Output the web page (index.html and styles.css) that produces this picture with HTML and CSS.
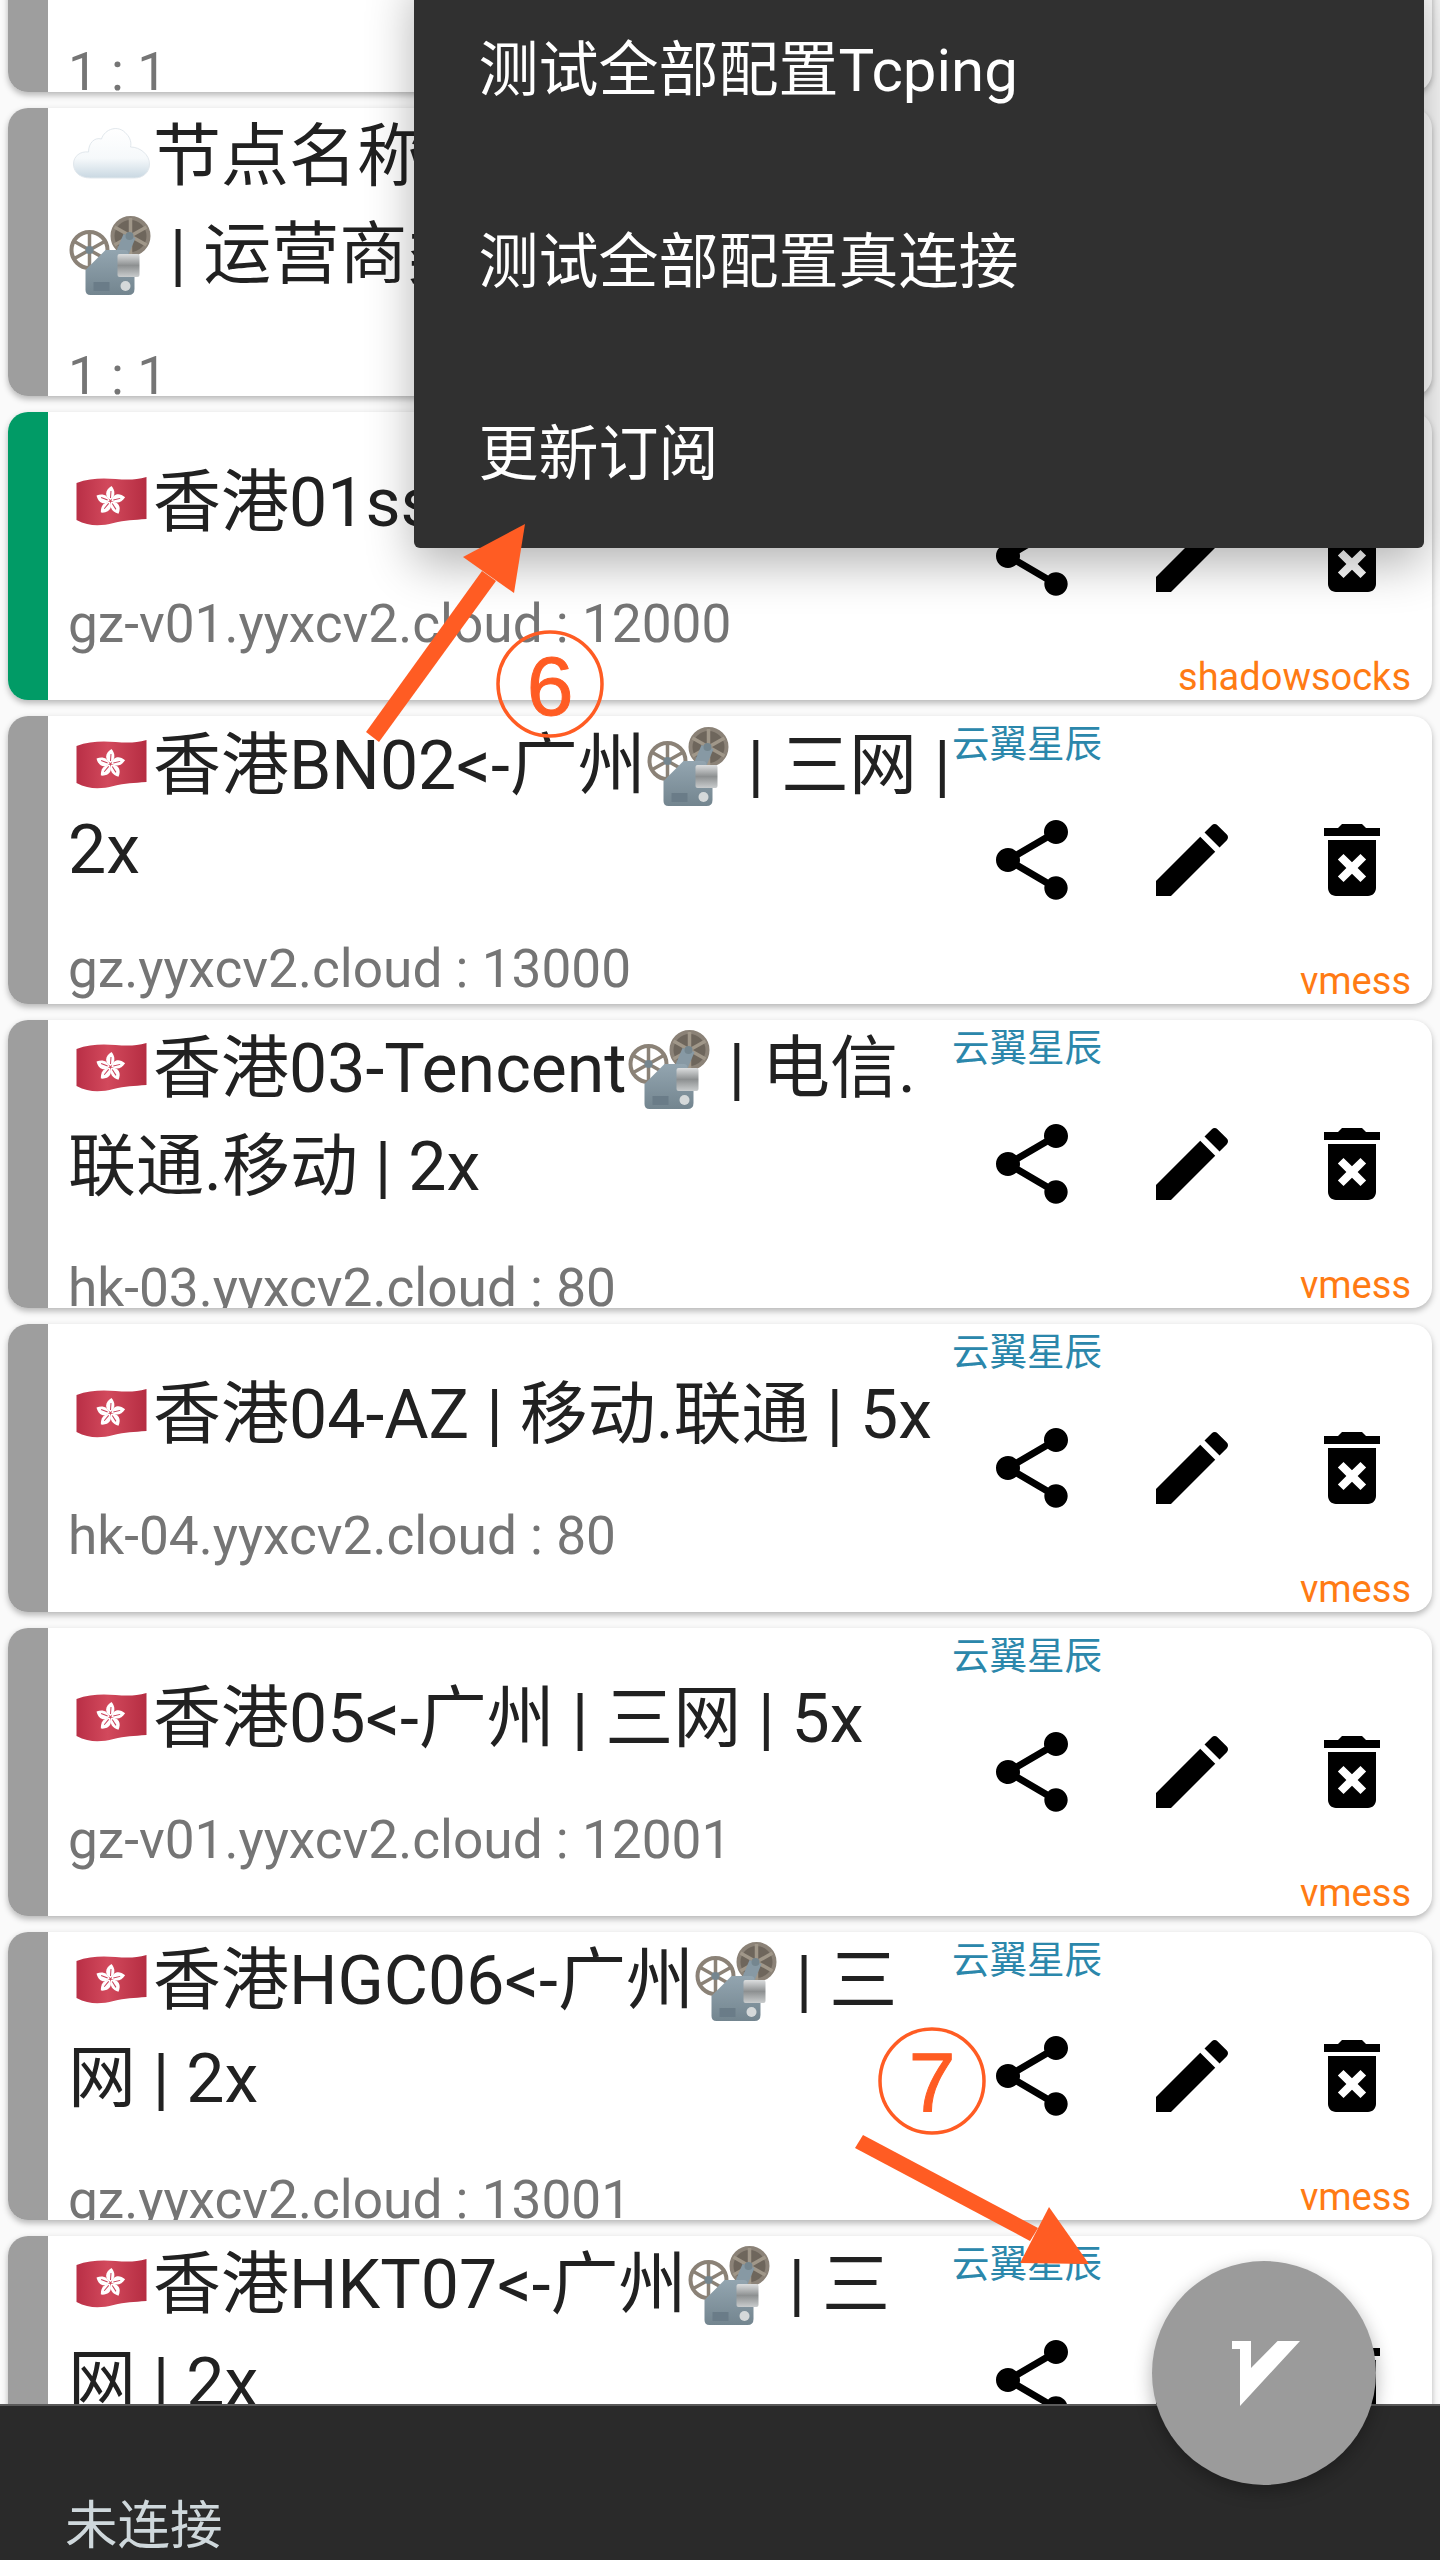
FILE: index.html
```html
<!DOCTYPE html>
<html lang="zh-CN">
<head>
    <meta charset="UTF-8">
    <meta name="viewport" content="width=device-width, initial-scale=1.0">
    <title>v2rayNG</title>
    <link rel="stylesheet" href="styles.css">
</head>
<body>

<svg class="sprite" aria-hidden="true">
    <defs>
        <linearGradient id="flag-red" x1="0" y1="0" x2="1" y2="0">
            <stop offset="0" stop-color="#b92f46"/>
            <stop offset="0.45" stop-color="#d2495c"/>
            <stop offset="1" stop-color="#b52d42"/>
        </linearGradient>
        <linearGradient id="cloud-fill" x1="0" y1="0" x2="0" y2="1">
            <stop offset="0" stop-color="#ffffff"/>
            <stop offset="0.6" stop-color="#f6f9fb"/>
            <stop offset="1" stop-color="#c9d8e2"/>
        </linearGradient>
        <linearGradient id="body-fill" x1="0" y1="0" x2="0" y2="1">
            <stop offset="0" stop-color="#93a5b0"/>
            <stop offset="1" stop-color="#73858f"/>
        </linearGradient>
        <linearGradient id="lens-fill" x1="0" y1="0" x2="0" y2="1">
            <stop offset="0" stop-color="#dcdedf"/>
            <stop offset="0.5" stop-color="#8d9091"/>
            <stop offset="1" stop-color="#c9cccd"/>
        </linearGradient>
        <symbol id="petal" viewBox="-16 -16 32 32" overflow="visible">
            <path fill="#fff" d="M0 -1C-6 -4 -6 -11 1 -15C5 -10 5 -5 0 -1Z"/>
            <path fill="none" stroke="#c9405a" stroke-width="1" d="M0 -3L0.500 -10"/>
        </symbol>
        <symbol id="flag-hk" viewBox="0 0 84 84">
            <path fill="url(#flag-red)" d="M8 27C21 22 35 22 47 23S67 24 78 21V63C65 64 57 64 45 67S21 71 8 64Z"/>
            <g transform="translate(42 45)">
                <use href="#petal" x="-16" y="-16" width="32" height="32"/>
                <use href="#petal" x="-16" y="-16" width="32" height="32" transform="rotate(72)"/>
                <use href="#petal" x="-16" y="-16" width="32" height="32" transform="rotate(144)"/>
                <use href="#petal" x="-16" y="-16" width="32" height="32" transform="rotate(216)"/>
                <use href="#petal" x="-16" y="-16" width="32" height="32" transform="rotate(288)"/>
            </g>
        </symbol>
        <symbol id="cloud" viewBox="0 0 84 84">
            <path fill="url(#cloud-fill)" stroke="#e2e8ed" stroke-width="1" d="M22 68C10 68 5 61 5 54C5 46 12 41 20 42C20 33 26 27 33 29C36 19 50 14 58 24C62 28 63 33 62 37C72 37 81 45 81 54C81 62 75 68 66 68Z"/>
        </symbol>
        <symbol id="projector" viewBox="0 -3 84 84" overflow="visible">
            <g fill="none" stroke="#8b8277">
                <circle cx="21" cy="39" r="18" stroke-width="4"/>
                <path stroke-width="3.500" d="M21 21V57M5 30L37 48M5 48L37 30"/>
            </g>
            <circle cx="62" cy="25" r="18" fill="#6e665c" stroke="#8b8277" stroke-width="4"/>
            <path fill="none" stroke="#a09789" stroke-width="3.500" d="M62 7V43M46 16L78 34M46 34L78 16"/>
            <path fill="#8799a4" d="M55 23L67 27L59 46L47 42Z"/>
            <circle cx="21" cy="39" r="4" fill="#75868f"/>
            <circle cx="61" cy="25" r="4" fill="#75868f"/>
            <path fill="url(#body-fill)" d="M17 59L37 39H56Q60 39 60 43V46H68V64H66V78Q66 84 60 84H22Q17 84 17 79Z"/>
            <rect x="49" y="43" width="22" height="23" rx="2" fill="url(#lens-fill)"/>
            <rect x="25" y="71" width="16" height="9" fill="#6a7c88"/>
            <circle cx="57" cy="75" r="5" fill="#d5d9da"/>
        </symbol>
        <symbol id="icon-share" viewBox="0 0 24 24">
            <path d="M18 16.08c-.76 0-1.44.3-1.96.77L8.91 12.7c.05-.23.09-.46.09-.7s-.04-.47-.09-.7l7.05-4.11c.54.5 1.25.81 2.04.81 1.66 0 3-1.34 3-3s-1.34-3-3-3-3 1.34-3 3c0 .24.04.47.09.7L8.04 9.81C7.5 9.31 6.79 9 6 9c-1.66 0-3 1.34-3 3s1.34 3 3 3c.79 0 1.5-.31 2.04-.81l7.12 4.16c-.05.21-.08.43-.08.65 0 1.61 1.31 2.92 2.92 2.92 1.61 0 2.92-1.31 2.92-2.92s-1.31-2.92-2.92-2.92z"/>
        </symbol>
        <symbol id="icon-edit" viewBox="0 0 24 24">
            <path d="M3 17.25V21h3.75L17.81 9.94l-3.75-3.75L3 17.25zM20.71 7.04c.39-.39.39-1.02 0-1.41l-2.34-2.34c-.39-.39-1.02-.39-1.41 0l-1.83 1.83 3.75 3.75 1.83-1.83z"/>
        </symbol>
        <symbol id="icon-delete" viewBox="0 0 24 24">
            <path d="M6 19c0 1.1.9 2 2 2h8c1.1 0 2-.9 2-2V7H6v12zm2.46-7.12l1.41-1.41L12 12.59l2.12-2.12 1.41 1.41L13.41 14l2.12 2.12-1.41 1.41L12 15.41l-2.12 2.12-1.41-1.41L10.59 14l-2.13-2.12zM15.5 4l-1-1h-5l-1 1H5v2h14V4z"/>
        </symbol>
    </defs>
</svg>

<div class="screen">
    <div class="list-viewport">
        <div class="server-list">

            <div class="card">
                <div class="stripe"></div>
                <div class="info">
                    <div class="info-inner">
                        <div class="title"><svg class="emoji"><use href="#cloud"/></svg>节点名称</div>
                        <div class="title"><svg class="emoji"><use href="#projector"/></svg> | 运营商类型</div>
                        <div class="address">1 : 1</div>
                    </div>
                </div>
            </div>

            <div class="card">
                <div class="stripe"></div>
                <div class="info">
                    <div class="info-inner">
                        <div class="title"><svg class="emoji"><use href="#cloud"/></svg>节点名称</div>
                        <div class="title"><svg class="emoji"><use href="#projector"/></svg> | 运营商类型</div>
                        <div class="address">1 : 1</div>
                    </div>
                </div>
            </div>

            <div class="card">
                <div class="stripe stripe-active"></div>
                <div class="info">
                    <div class="info-inner">
                        <div class="title"><svg class="emoji"><use href="#flag-hk"/></svg>香港01ss</div>
                        <div class="address">gz-v01.yyxcv2.cloud : 12000</div>
                    </div>
                </div>
                <div class="side">
                    <div class="provider"></div>
                    <div class="actions">
                        <svg class="action"><use href="#icon-share"/></svg>
                        <svg class="action"><use href="#icon-edit"/></svg>
                        <svg class="action"><use href="#icon-delete"/></svg>
                    </div>
                    <div class="protocol">shadowsocks</div>
                </div>
            </div>

            <div class="card">
                <div class="stripe"></div>
                <div class="info">
                    <div class="info-inner">
                        <div class="title"><svg class="emoji"><use href="#flag-hk"/></svg>香港BN02&lt;-广州<svg class="emoji"><use href="#projector"/></svg> | 三网 |</div>
                        <div class="title title-latin">2x</div>
                        <div class="address">gz.yyxcv2.cloud : 13000</div>
                    </div>
                </div>
                <div class="side">
                    <div class="provider">云翼星辰</div>
                    <div class="actions">
                        <svg class="action"><use href="#icon-share"/></svg>
                        <svg class="action"><use href="#icon-edit"/></svg>
                        <svg class="action"><use href="#icon-delete"/></svg>
                    </div>
                    <div class="protocol">vmess</div>
                </div>
            </div>

            <div class="card">
                <div class="stripe"></div>
                <div class="info">
                    <div class="info-inner">
                        <div class="title"><svg class="emoji"><use href="#flag-hk"/></svg>香港03-Tencent<svg class="emoji"><use href="#projector"/></svg> | 电信.</div>
                        <div class="title">联通.移动 | 2x</div>
                        <div class="address">hk-03.yyxcv2.cloud : 80</div>
                    </div>
                </div>
                <div class="side">
                    <div class="provider">云翼星辰</div>
                    <div class="actions">
                        <svg class="action"><use href="#icon-share"/></svg>
                        <svg class="action"><use href="#icon-edit"/></svg>
                        <svg class="action"><use href="#icon-delete"/></svg>
                    </div>
                    <div class="protocol">vmess</div>
                </div>
            </div>

            <div class="card">
                <div class="stripe"></div>
                <div class="info">
                    <div class="info-inner">
                        <div class="title"><svg class="emoji"><use href="#flag-hk"/></svg>香港04-AZ | 移动.联通 | 5x</div>
                        <div class="address">hk-04.yyxcv2.cloud : 80</div>
                    </div>
                </div>
                <div class="side">
                    <div class="provider">云翼星辰</div>
                    <div class="actions">
                        <svg class="action"><use href="#icon-share"/></svg>
                        <svg class="action"><use href="#icon-edit"/></svg>
                        <svg class="action"><use href="#icon-delete"/></svg>
                    </div>
                    <div class="protocol">vmess</div>
                </div>
            </div>

            <div class="card">
                <div class="stripe"></div>
                <div class="info">
                    <div class="info-inner">
                        <div class="title"><svg class="emoji"><use href="#flag-hk"/></svg>香港05&lt;-广州 | 三网 | 5x</div>
                        <div class="address">gz-v01.yyxcv2.cloud : 12001</div>
                    </div>
                </div>
                <div class="side">
                    <div class="provider">云翼星辰</div>
                    <div class="actions">
                        <svg class="action"><use href="#icon-share"/></svg>
                        <svg class="action"><use href="#icon-edit"/></svg>
                        <svg class="action"><use href="#icon-delete"/></svg>
                    </div>
                    <div class="protocol">vmess</div>
                </div>
            </div>

            <div class="card">
                <div class="stripe"></div>
                <div class="info">
                    <div class="info-inner">
                        <div class="title"><svg class="emoji"><use href="#flag-hk"/></svg>香港HGC06&lt;-广州<svg class="emoji"><use href="#projector"/></svg> | 三</div>
                        <div class="title">网 | 2x</div>
                        <div class="address">gz.yyxcv2.cloud : 13001</div>
                    </div>
                </div>
                <div class="side">
                    <div class="provider">云翼星辰</div>
                    <div class="actions">
                        <svg class="action"><use href="#icon-share"/></svg>
                        <svg class="action"><use href="#icon-edit"/></svg>
                        <svg class="action"><use href="#icon-delete"/></svg>
                    </div>
                    <div class="protocol">vmess</div>
                </div>
            </div>

            <div class="card">
                <div class="stripe"></div>
                <div class="info">
                    <div class="info-inner info-inner-top">
                        <div class="title"><svg class="emoji"><use href="#flag-hk"/></svg>香港HKT07&lt;-广州<svg class="emoji"><use href="#projector"/></svg> | 三</div>
                        <div class="title">网 | 2x</div>
                    </div>
                </div>
                <div class="side">
                    <div class="provider">云翼星辰</div>
                    <div class="actions">
                        <svg class="action"><use href="#icon-share"/></svg>
                        <svg class="action"><use href="#icon-edit"/></svg>
                        <svg class="action"><use href="#icon-delete"/></svg>
                    </div>
                </div>
            </div>

        </div>
    </div>

    <div class="status-bar">未连接</div>

    <div class="fab">
        <svg class="fab-logo" viewBox="0 0 68 65">
            <path fill="#fff" d="M0 0H19V27L45.600 0H68L8 65V8H0Z"/>
        </svg>
    </div>

    <div class="menu">
        <div class="menu-item">测试全部配置Tcping</div>
        <div class="menu-item">测试全部配置真连接</div>
        <div class="menu-item">更新订阅</div>
    </div>

    <!-- orange marks drawn on top of the screenshot -->
    <svg class="marks" viewBox="0 0 1440 2560">
        <g fill="#ff5c23">
            <path d="M366 732L482 571L496 581L379 742Z"/>
            <path d="M525 524L463 557L514 593Z"/>
            <path d="M855 2148L863 2135L1038 2228L1030 2241Z"/>
            <path d="M1049 2207L1089 2264L1020 2263Z"/>
        </g>
        <g fill="none" stroke="#ff5c23" stroke-width="3.500">
            <circle cx="550" cy="684" r="52"/>
            <circle cx="932" cy="2081" r="52"/>
        </g>
        <text class="mark-num" x="550" y="715">6</text>
        <text class="mark-num" x="932" y="2111">7</text>
    </svg>
</div>

</body>
</html>
```

FILE: styles.css
```css
* {
    box-sizing: border-box;
}

body {
    margin: 0;
    background-color: #fafafa;
    font-family: Roboto, "Noto Sans CJK SC", sans-serif;
}

.sprite {
    position: absolute;
    width: 0;
    height: 0;
}

.screen {
    position: relative;
    display: flex;
    flex-direction: column;
    width: 1440px;
    height: 2560px;
    overflow: hidden;
}

.list-viewport {
    flex: 1;
    min-height: 0;
    overflow: hidden;
}

/* list is scrolled, first card starts above the window */
.server-list {
    display: flex;
    flex-direction: column;
    gap: 16px;
    margin-top: -196px;
    padding: 0 8px;
}

.card {
    display: flex;
    flex: none;
    height: 288px;
    background-color: #fff;
    border-radius: 20px;
    overflow: hidden;
    box-shadow: 0 3px 6px rgba(0, 0, 0, 0.28);
}

.stripe {
    flex: none;
    width: 40px;
    background-color: #9e9e9e;
}

.stripe-active {
    background-color: #019b66;
}

.info {
    display: flex;
    flex-direction: column;
    flex: none;
    width: 904px;
    padding-left: 20px;
}

.info-inner {
    margin: auto 0;
}

.info-inner-top {
    margin: 0;
}

.title {
    height: 98px;
    font-size: 68px;
    line-height: 98px;
    color: #212121;
    white-space: nowrap;
}

.title-latin {
    height: 82px;
    line-height: 70px;
}

.emoji {
    width: 85px;
    height: 84px;
    vertical-align: -14px;
    overflow: visible;
}

.address {
    height: 68px;
    margin-top: 38px;
    font-size: 53.2px;
    line-height: 68px;
    color: #757575;
    white-space: nowrap;
}

.side {
    display: flex;
    flex-direction: column;
    flex: 1;
}

.provider {
    height: 56px;
    font-size: 37.5px;
    line-height: 56px;
    color: #2b87ab;
}

.actions {
    display: flex;
    margin-top: 40px;
}

.action {
    width: 96px;
    height: 96px;
    margin: 0 32px;
    fill: #000;
}

.protocol {
    margin-top: auto;
    padding-right: 21px;
    font-size: 38px;
    line-height: 46px;
    text-align: right;
    color: #ff7b14;
}

.status-bar {
    flex: none;
    height: 156px;
    padding: 88px 0 0 65px;
    background-color: #2a2a2a;
    border-top: 2px solid #5a5a5a;
    font-size: 52.5px;
    line-height: 64px;
    color: #cfd8dc;
}

.fab {
    position: absolute;
    left: 1152px;
    top: 2261px;
    display: flex;
    align-items: center;
    justify-content: center;
    width: 224px;
    height: 224px;
    padding: 0 0 0 3px;
    background-color: #9b9b9b;
    border-radius: 50%;
    box-shadow: 0 6px 18px rgba(0, 0, 0, 0.3);
}

.fab-logo {
    width: 68px;
    height: 65px;
}

.menu {
    position: absolute;
    left: 414px;
    top: -28px;
    width: 1010px;
    background-color: #303030;
    border-radius: 6px;
    box-shadow: 0 16px 48px rgba(0, 0, 0, 0.3);
}

.menu-item {
    height: 192px;
    padding-left: 64.5px;
    font-size: 60px;
    line-height: 198px;
    color: #fff;
}

.marks {
    position: absolute;
    left: 0;
    top: 0;
    width: 1440px;
    height: 2560px;
}

.mark-num {
    font-family: "Liberation Sans", sans-serif;
    font-size: 84px;
    text-anchor: middle;
    fill: #ff5c23;
    stroke: #ff5c23;
    stroke-width: 1px;
}
```
